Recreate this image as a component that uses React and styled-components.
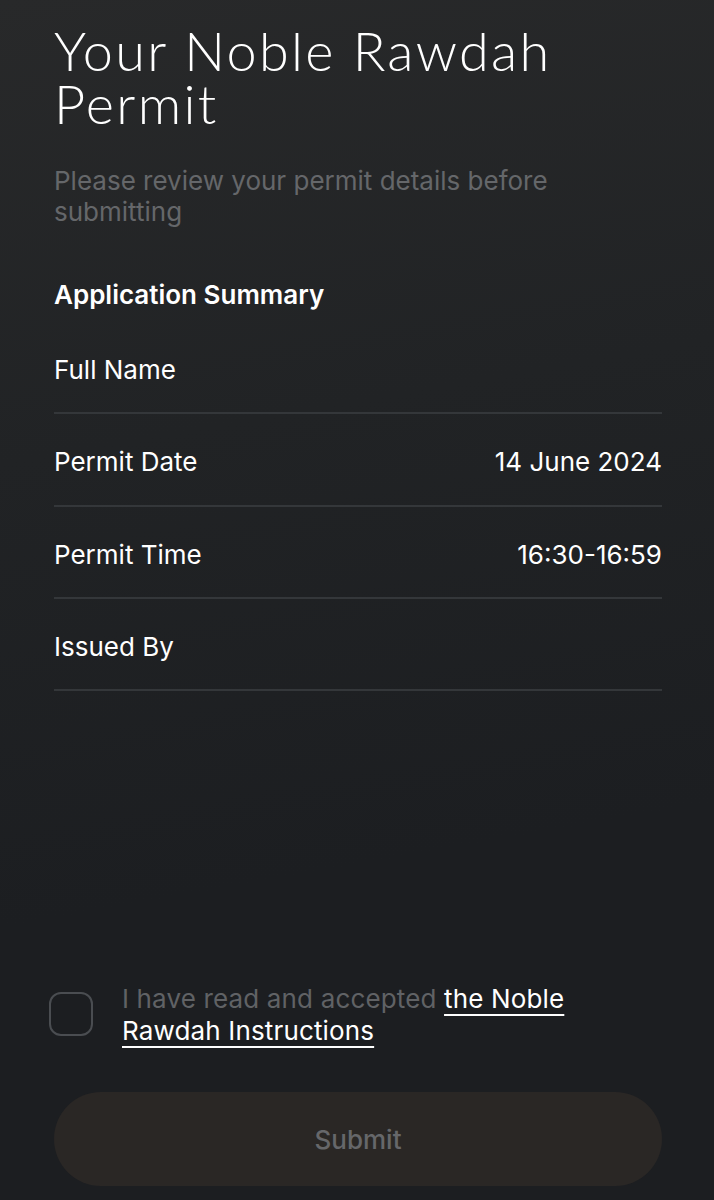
import React from "react";
import styled, { createGlobalStyle } from "styled-components";

const Global = createGlobalStyle`
  html, body { margin: 0; padding: 0; background: #1d1f22; }
  body { font-family: Inter, "Noto Sans", sans-serif; -webkit-font-smoothing: antialiased; }
  * { box-sizing: border-box; }
`;

const Page = styled.div`
  width: 714px;
  height: 1200px;
  overflow: hidden;
  background: linear-gradient(170deg, #28292a 0%, #212325 35%, #1c1e21 70%, #1c1e21 100%);
  padding: 24px 52px 0 54px;
  display: flex;
  flex-direction: column;
  color: #ffffff;
`;

const Title = styled.h1`
  margin: 0;
  font-family: Lato, "Open Sans", sans-serif;
  font-weight: 300;
  font-size: 54px;
  line-height: 53px;
  letter-spacing: 2.3px;
  color: #ffffff;
`;

const Subtitle = styled.p`
  margin: 35px 0 0;
  font-size: 26px;
  line-height: 31px;
  color: #65676a;
  font-weight: 400;
`;

const SectionTitle = styled.h2`
  margin: 53px 0 0;
  font-size: 26px;
  line-height: 30px;
  font-weight: 600;
  color: #ffffff;
`;

const List = styled.div`
  display: flex;
  flex-direction: column;
  margin-top: 12px;
`;

const Row = styled.div`
  display: flex;
  justify-content: space-between;
  align-items: center;
  height: 92.3px;
  padding-top: 6px;
  border-bottom: 2px solid #34373a;
  font-size: 26px;
  line-height: 30px;
`;

const Label = styled.span`
  color: #ffffff;
`;

const Value = styled.span`
  color: #ffffff;
`;

const Spacer = styled.div`
  flex: 1;
`;

const Agree = styled.label`
  display: flex;
  align-items: flex-start;
  gap: 29px;
  margin-left: -5px;
`;

const Box = styled.span`
  flex: none;
  width: 44px;
  height: 44px;
  border: 2px solid #4a4d51;
  border-radius: 12px;
  margin-top: 9px;
`;

const AgreeText = styled.span`
  font-size: 26px;
  line-height: 32px;
  color: #606265;
  letter-spacing: 0.15px;
`;

const Link = styled.a`
  color: #ffffff;
  text-decoration: underline;
  text-decoration-thickness: 2px;
  text-underline-offset: 6px;
`;

const Submit = styled.button`
  margin: 45px 0 14px;
  height: 94px;
  width: 100%;
  border: none;
  border-radius: 47px;
  background: #2a2725;
  color: #66676a;
  font-family: Inter, "Noto Sans", sans-serif;
  font-size: 26px;
  font-weight: 500;
`;

const rows = [
  { label: "Full Name", value: "" },
  { label: "Permit Date", value: "14 June 2024" },
  { label: "Permit Time", value: "16:30-16:59" },
  { label: "Issued By", value: "" },
];

export default function App() {
  return (
    <>
      <Global />
      <Page>
        <Title>Your Noble Rawdah Permit</Title>
        <Subtitle>Please review your permit details before submitting</Subtitle>
        <SectionTitle>Application Summary</SectionTitle>
        <List>
          {rows.map((r) => (
            <Row key={r.label}>
              <Label>{r.label}</Label>
              <Value>{r.value}</Value>
            </Row>
          ))}
        </List>
        <Spacer />
        <Agree>
          <Box />
          <AgreeText>
            I have read and accepted <Link>the Noble Rawdah Instructions</Link>
          </AgreeText>
        </Agree>
        <Submit>Submit</Submit>
      </Page>
    </>
  );
}
